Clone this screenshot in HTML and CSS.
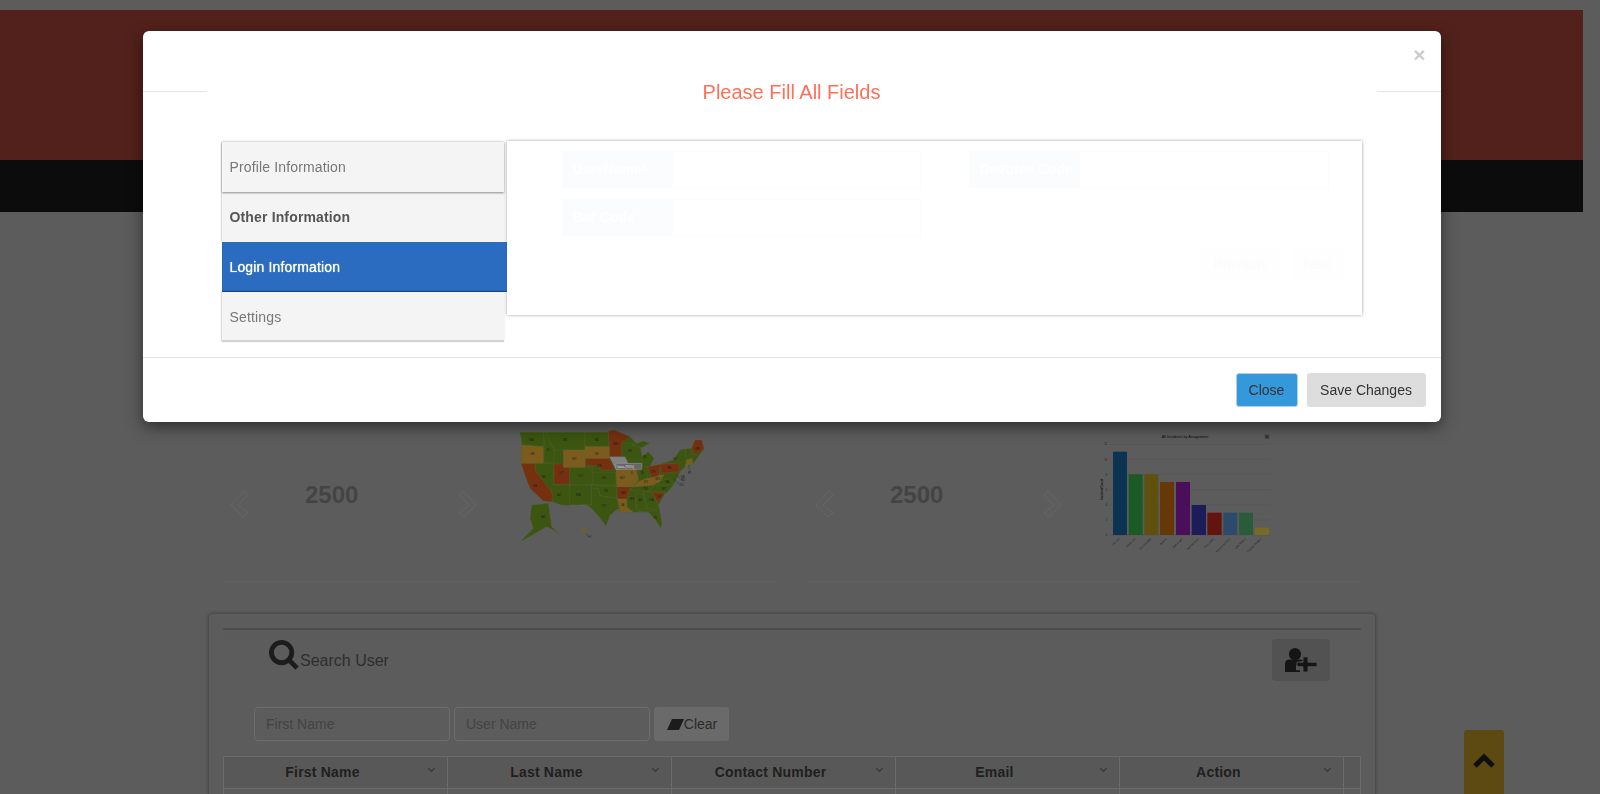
FILE: index.html
```html
<!DOCTYPE html>
<html lang="en">
<head>
    <meta charset="UTF-8">
    <title>Users</title>
    <link rel="stylesheet" href="styles.css">
</head>
<body>
    <header class="banner"></header>
    <nav class="menu-bar"></nav>

    <main class="page">
        <section class="stats">
            <div class="stat-card">
                <div class="slider">
                    <svg class="chevron" viewBox="0 0 20 28"><path d="M14 1 L1 15 L13 27 L18 23 L8 15 L18 5 Z"/></svg>
                    <span class="stat-value">2500</span>
                    <svg class="chevron" viewBox="0 0 20 28"><path d="M6 1 L19 15 L7 27 L2 23 L12 15 L2 5 Z"/></svg>
                </div>
                <svg class="us-map" viewBox="0 0 630 375">
                    <path class="us-land" d="M30 22 L295 22 L312 15 L360 35 L392 70 L398 120 L420 125 L450 118 L460 115 L490 105 L510 75 L545 70 L555 45 L575 45 L582 72 L550 115 L525 125 L510 140 L490 180 L465 205 L445 240 L456 295 L452 310 L435 282 L415 262 L370 262 L330 262 L325 250 L300 270 L288 302 L265 272 L245 250 L230 240 L155 240 L125 230 L100 228 L60 190 L45 150 L33 115 L35 50 Z"/>
                    <g class="states-green">
                        <path d="M30 22 L100 22 L100 65 L50 62 L35 50 Z"/>
                        <path d="M100 22 L112 22 L125 60 L135 75 L130 115 L100 112 L105 65 Z"/>
                        <path d="M108 22 L225 22 L225 75 L135 75 L125 60 Z"/>
                        <path d="M225 22 L295 22 L298 65 L225 65 Z"/>
                        <path d="M335 55 L370 55 L392 70 L398 105 L350 105 L335 90 Z"/>
                        <path d="M365 60 L400 48 L420 55 L395 68 Z"/>
                        <path d="M395 95 L415 80 L432 100 L420 125 L398 125 Z"/>
                        <path d="M385 125 L410 125 L412 160 L385 170 Z"/>
                        <path d="M248 143 L318 143 L318 180 L248 180 Z"/>
                        <path d="M178 127 L248 127 L248 180 L178 180 Z"/>
                        <path d="M75 115 L130 117 L130 190 L122 205 L75 135 Z"/>
                        <path d="M125 180 L178 180 L178 242 L155 240 L125 228 Z"/>
                        <path d="M178 180 L245 180 L245 240 L178 240 Z"/>
                        <path d="M245 180 L320 185 L320 220 L270 212 L265 190 L245 190 Z"/>
                        <path d="M245 190 L265 190 L270 212 L320 220 L325 250 L300 270 L288 302 L265 272 L245 250 L230 240 L207 240 L245 240 Z"/>
                        <path d="M350 215 L376 215 L376 255 L355 258 Z"/>
                        <path d="M378 205 L400 205 L410 250 L380 250 Z"/>
                        <path d="M400 200 L425 200 L445 240 L440 255 L412 250 Z"/>
                        <path d="M380 258 L440 258 L456 295 L452 310 L435 282 L415 262 Z"/>
                        <path d="M415 200 L435 180 L490 180 L470 205 Z"/>
                        <path d="M360 195 L370 185 L435 180 L415 200 Z"/>
                        <path d="M430 180 L455 165 L480 160 L490 180 Z"/>
                        <path d="M460 115 L490 105 L510 75 L525 72 L530 105 L510 115 Z"/>
                        <path d="M525 72 L545 70 L545 100 L530 105 Z"/>
                        <path d="M65 240 L115 235 L125 305 L160 335 L140 320 L110 305 L50 340 L30 350 L70 310 L60 280 Z"/>
                    </g>
                    <g class="states-red">
                        <path d="M295 18 L312 15 L360 35 L335 55 L335 95 L298 95 L298 65 Z"/>
                        <path d="M228 100 L298 100 L315 135 L270 135 L270 122 L228 122 Z"/>
                        <path d="M132 117 L160 117 L160 127 L178 127 L178 178 L132 178 Z"/>
                        <path d="M33 115 L75 115 L75 135 L128 205 L125 230 L100 228 L60 190 L45 150 Z"/>
                        <path d="M320 185 L362 185 L350 222 L323 222 Z"/>
                        <path d="M425 200 L465 205 L443 233 Z"/>
                        <path d="M412 125 L450 118 L448 150 L425 158 Z"/>
                        <path d="M450 118 L505 115 L510 140 L455 145 Z"/>
                        <path d="M545 70 L555 45 L575 45 L582 72 L555 90 Z"/>
                    </g>
                    <g class="states-gold">
                        <path d="M35 60 L100 65 L100 115 L33 115 Z"/>
                        <path d="M160 75 L225 75 L225 127 L160 127 Z"/>
                        <path d="M225 65 L298 65 L298 100 L225 100 Z"/>
                        <path d="M318 135 L355 130 L370 185 L320 185 Z"/>
                        <path d="M355 115 L375 115 L385 165 L370 185 L358 150 Z"/>
                        <path d="M370 185 L385 170 L412 160 L440 155 L455 165 L430 180 L375 185 Z"/>
                        <path d="M435 160 L448 150 L462 150 L445 175 Z"/>
                        <path d="M323 222 L350 222 L350 245 L370 262 L330 262 Z"/>
                        <path d="M530 105 L545 100 L550 115 L525 125 Z"/>
                        <path d="M215 310 L225 312 L228 324 L216 322 Z"/>
                    </g>
                    <path class="state-hover" d="M298 95 L345 95 L355 115 L355 130 L318 135 Z"/>
                    <g class="islands">
                        <circle cx="167" cy="283" r="2"/>
                        <circle cx="185" cy="292" r="2"/>
                        <circle cx="200" cy="297" r="2.5"/>
                    </g>
                    <g class="map-lines">
                        <path d="M228 324 L235 335 M495 150 L510 158 M490 160 L510 180 M535 120 L540 140"/>
                    </g>
                    <g class="map-labels">
                        <text x="57" y="48">WA</text>
                        <text x="110" y="78">ID</text>
                        <text x="160" y="47">MT</text>
                        <text x="254" y="47">ND</text>
                        <text x="60" y="91">OR</text>
                        <text x="186" y="104">WY</text>
                        <text x="254" y="89">SD</text>
                        <text x="310" y="60">MN</text>
                        <text x="354" y="82">WI</text>
                        <text x="400" y="100">MI</text>
                        <text x="262" y="126">NE</text>
                        <text x="95" y="160">NV</text>
                        <text x="68" y="185">CA</text>
                        <text x="148" y="148">UT</text>
                        <text x="205" y="157">CO</text>
                        <text x="276" y="163">KS</text>
                        <text x="142" y="214">AZ</text>
                        <text x="198" y="214">NM</text>
                        <text x="282" y="202">OK</text>
                        <text x="275" y="245">TX</text>
                        <text x="94" y="280">AK</text>
                        <text x="330" y="163">MO</text>
                        <text x="362" y="146">IL</text>
                        <text x="392" y="146">IN</text>
                        <text x="422" y="143">OH</text>
                        <text x="472" y="133">PA</text>
                        <text x="490" y="105">NY</text>
                        <text x="556" y="74">ME</text>
                        <text x="402" y="173">KY</text>
                        <text x="436" y="166">WV</text>
                        <text x="466" y="173">VA</text>
                        <text x="400" y="194">TN</text>
                        <text x="456" y="196">NC</text>
                        <text x="442" y="219">SC</text>
                        <text x="334" y="206">AR</text>
                        <text x="332" y="244">LA</text>
                        <text x="360" y="226">MS</text>
                        <text x="386" y="229">AL</text>
                        <text x="418" y="229">GA</text>
                        <text x="432" y="282">FL</text>
                        <text x="534" y="146">RI</text>
                        <text x="512" y="160">DE</text>
                        <text x="512" y="167">MD</text>
                        <text x="510" y="182">DC</text>
                        <text class="map-hi" x="235" y="340">HI</text>
                    </g>
                    <rect class="map-tip-box" x="318" y="115" width="77" height="18" rx="1"/>
                    <text class="map-tip" x="322" y="128">Iowa (91%)</text>
                </svg>
            </div>
            <div class="stat-card">
                <div class="slider">
                    <svg class="chevron" viewBox="0 0 20 28"><path d="M14 1 L1 15 L13 27 L18 23 L8 15 L18 5 Z"/></svg>
                    <span class="stat-value">2500</span>
                    <svg class="chevron" viewBox="0 0 20 28"><path d="M6 1 L19 15 L7 27 L2 23 L12 15 L2 5 Z"/></svg>
                </div>
                <svg class="bar-chart" viewBox="0 0 600 390">
                    <text class="chart-title" x="288" y="38">All Incidents by Assignment</text>
                    <rect class="chart-menu" x="527" y="28" width="14" height="14"/>
                    <path class="chart-menu-lines" d="M529 32 H539 M529 35 H539 M529 38 H539"/>
                    <path class="chart-grid" d="M60 58 H545 M60 103 H545 M60 148 H545 M60 194 H545 M60 240 H545 M60 285 H545 M60 330 H545"/>
                    <g class="chart-ticks">
                        <text x="55" y="61">12</text>
                        <text x="55" y="107">10</text>
                        <text x="55" y="152">8</text>
                        <text x="55" y="198">6</text>
                        <text x="55" y="244">4</text>
                        <text x="55" y="289">2</text>
                        <text x="55" y="334">0</text>
                    </g>
                    <text class="chart-axis" transform="translate(42 193) rotate(-90)">Incident Count</text>
                    <rect x="72" y="80" width="42" height="250" fill="#0b3352"/>
                    <rect x="119" y="148" width="42" height="182" fill="#1c5a24"/>
                    <rect x="166" y="148" width="42" height="182" fill="#60500e"/>
                    <rect x="213" y="171" width="42" height="159" fill="#663808"/>
                    <rect x="261" y="171" width="42" height="159" fill="#4a0e5a"/>
                    <rect x="308" y="240" width="43" height="90" fill="#1c1c58"/>
                    <rect x="355" y="263" width="43" height="67" fill="#64140e"/>
                    <rect x="403" y="263" width="42" height="67" fill="#2e4a6a"/>
                    <rect x="450" y="263" width="42" height="67" fill="#2a5c3a"/>
                    <rect x="497" y="308" width="43" height="22" fill="#7a6a28"/>
                    <g class="chart-labels">
                        <text transform="translate(92 342) rotate(-45)">Eric Joy</text>
                        <text transform="translate(140 342) rotate(-45)">David Lee</text>
                        <text transform="translate(187 342) rotate(-45)">Don Goodlife</text>
                        <text transform="translate(234 342) rotate(-45)">Beverly</text>
                        <text transform="translate(282 342) rotate(-45)">Beth Anglin</text>
                        <text transform="translate(330 342) rotate(-45)">Bud Richman</text>
                        <text transform="translate(376 342) rotate(-45)">Fred Luddy</text>
                        <text transform="translate(424 342) rotate(-45)">Howard Johnson</text>
                        <text transform="translate(471 342) rotate(-45)">Luke Wilson</text>
                        <text transform="translate(518 342) rotate(-45)">Charles Beckley</text>
                    </g>
                </svg>
            </div>
        </section>

        <section class="user-panel">
            <div class="panel-rule"></div>
            <div class="panel-top">
                <div class="panel-title">
                    <svg class="search-icon" viewBox="0 0 32 32"><circle cx="13" cy="13" r="10.5"/><path d="M20.5 20.5 L29 29"/></svg>
                    <span>Search User</span>
                </div>
                <button class="add-user" type="button">
                    <svg viewBox="0 0 32 27" width="32" height="24" preserveAspectRatio="none">
                        <ellipse cx="10" cy="7" rx="6" ry="7"/>
                        <path d="M0 27 V18 Q0 13 5 13 H15 Q18 13 19 15 H15 V19 H11 V25 H15 V27 Z"/>
                        <path d="M18 10 H23 V16 H32 V21 H23 V27 H18 V21 H12 V16 H18 Z"/>
                    </svg>
                </button>
            </div>
            <form class="filters">
                <input type="text" placeholder="First Name">
                <input type="text" placeholder="User Name">
                <button class="clear-btn" type="button">
                    <svg viewBox="0 0 17 11" width="17" height="11"><path d="M5 0 H17 L12 11 H0 Z"/></svg>Clear
                </button>
            </form>
            <div class="grid-head">
                <div class="grid-cell">First Name<span class="sort-mark"></span></div>
                <div class="grid-cell">Last Name<span class="sort-mark"></span></div>
                <div class="grid-cell">Contact Number<span class="sort-mark"></span></div>
                <div class="grid-cell">Email<span class="sort-mark"></span></div>
                <div class="grid-cell">Action<span class="sort-mark"></span></div>
                <div class="grid-cell"></div>
            </div>
            <div class="grid-row">
                <div class="grid-cell"></div>
                <div class="grid-cell"></div>
                <div class="grid-cell"></div>
                <div class="grid-cell"></div>
                <div class="grid-cell"></div>
                <div class="grid-cell"></div>
            </div>
        </section>
    </main>

    <button class="to-top" type="button">
        <svg viewBox="0 0 22 16" width="22" height="16"><path d="M2 13 L11 4 L20 13"/></svg>
    </button>

    <div class="backdrop">
        <div class="modal">
            <button class="modal-close" type="button">×</button>
            <div class="modal-head">
                <h4>Please Fill All Fields</h4>
            </div>
            <div class="modal-body">
                <ul class="tabs">
                    <li class="tab tab-first">Profile Information</li>
                    <li class="tab tab-bold">Other Information</li>
                    <li class="tab tab-active">Login Information</li>
                    <li class="tab tab-last">Settings</li>
                </ul>
                <div class="tab-pane">
                    <div class="pane-fields">
                        <div class="field"><label>UserName*</label><span class="field-box"></span></div>
                        <div class="field"><label>Devotee Code</label><span class="field-box"></span></div>
                        <div class="field"><label>Bar Code</label><span class="field-box"></span></div>
                    </div>
                    <div class="pane-nav">
                        <button class="ghost-btn" type="button">Previous</button>
                        <button class="ghost-btn" type="button">Next</button>
                    </div>
                </div>
            </div>
            <div class="modal-foot">
                <button class="btn btn-blue" type="button">Close</button>
                <button class="btn btn-gray" type="button">Save Changes</button>
            </div>
        </div>
    </div>
</body>
</html>
```

FILE: styles.css
```css
* {
    box-sizing: border-box;
}
html, body {
    height: 794px;
    overflow: hidden;
}
body {
    margin: 0;
    padding: 10px 17px 0 0;
    background-color: #5c5c5c;
    font-family: "Liberation Sans", Arial, sans-serif;
    font-size: 14px;
    color: #2a2a2a;
}
button {
    font-family: inherit;
    border: none;
    cursor: pointer;
}

/* page behind the dialog */
.banner {
    height: 150px;
    background-color: #52211b;
}
.menu-bar {
    height: 52px;
    background-color: #0c0c0c;
}
.page {
    padding: 218px 207px 0 208px;
}
.stats {
    display: flex;
    gap: 30px;
    padding: 0 14px;
    height: 152px;
    margin-bottom: 31px;
}
.stat-card {
    flex: 1;
    display: flex;
    border-bottom: 1px solid #606060;
    border-radius: 3px;
}
.slider {
    width: 262px;
    flex: none;
    display: flex;
    align-items: flex-start;
    padding-left: 8px;
}
.chevron {
    width: 20px;
    height: 28px;
    margin-top: 60px;
    fill: none;
    stroke: #656565;
    stroke-width: 1;
}
.stat-value {
    width: 152px;
    margin: 50px 0 0 55px;
    font-size: 24px;
    font-weight: bold;
    line-height: 30px;
    color: #444;
}
.us-map {
    width: 210px;
    height: 125px;
    margin: -5px 0 0 26px;
    flex: none;
}
.us-land {
    fill: #3c5510;
}
.states-green path {
    fill: #3c5510;
    stroke: #5f6a50;
    stroke-width: .8;
}
.states-red path {
    fill: #75300f;
    stroke: #5f6a50;
    stroke-width: .8;
}
.states-gold path {
    fill: #7c5c1c;
    stroke: #5f6a50;
    stroke-width: .8;
}
.state-hover {
    fill: #808080;
}
.islands circle {
    fill: #7c5c1c;
}
.map-lines path {
    stroke: #222;
    stroke-width: 1;
    fill: none;
}
.map-labels text {
    font-size: 9px;
    fill: #1c1c1c;
}
.map-labels .map-hi {
    fill: #2a2a4a;
}
.map-tip-box {
    fill: #666;
    stroke: #b0b0b0;
    stroke-width: 1.2;
}
.map-tip {
    font-size: 10px;
    fill: #e0e0e0;
}
.bar-chart {
    width: 200px;
    height: 130px;
    margin: -5px 0 0 20px;
    flex: none;
}
.chart-title {
    font-size: 11.5px;
    fill: #0c0c0c;
    text-anchor: middle;
}
.chart-menu {
    fill: #4a4a4a;
}
.chart-menu-lines {
    stroke: #222;
    stroke-width: 1.5;
}
.chart-grid {
    stroke: #525252;
    stroke-width: 1.5;
    fill: none;
}
.chart-ticks text {
    font-size: 8px;
    fill: #1c1c1c;
    text-anchor: end;
}
.chart-axis {
    font-size: 9px;
    font-weight: bold;
    fill: #0c0c0c;
    text-anchor: middle;
}
.chart-labels text {
    font-size: 8px;
    fill: #1c1c1c;
    text-anchor: end;
}

.user-panel {
    height: 181px;
    overflow: hidden;
    padding: 14px 14px 0;
    border: 1px solid #4d4d4d;
    border-bottom: none;
    border-radius: 5px 5px 0 0;
    box-shadow: 0 0 3px rgba(0, 0, 0, .3);
}
.panel-rule {
    height: 2px;
    background-color: #4c4c4c;
    box-shadow: 0 6px 8px rgba(0, 0, 0, .04);
}
.panel-top {
    display: flex;
    justify-content: space-between;
    padding: 9px 31px 0 46px;
    height: 77px;
}
.panel-title {
    display: flex;
    align-items: flex-end;
    height: 34px;
    font-size: 16px;
    color: #2e2e2e;
}
.panel-title span {
    padding-bottom: 3px;
}
.search-icon {
    width: 31px;
    height: 31px;
    margin-bottom: 2px;
    fill: none;
    stroke: #1c1c1c;
    stroke-width: 5;
}
.add-user {
    width: 58px;
    height: 42px;
    padding: 0;
    background-color: #525252;
    border-radius: 4px;
    display: flex;
    align-items: center;
    justify-content: center;
}
.add-user svg {
    fill: #151515;
}
.add-user svg path:last-child {
    stroke: #525252;
    stroke-width: 1;
}
.filters {
    display: flex;
    gap: 4px;
    padding-left: 31px;
    height: 34px;
    margin-bottom: 15px;
}
.filters input {
    width: 196px;
    padding: 0 11px;
    font-family: inherit;
    font-size: 14px;
    background: transparent;
    border: 1px solid #6d6d6d;
    border-radius: 4px;
}
.filters input::placeholder {
    color: #434343;
}
.clear-btn {
    width: 75px;
    padding: 0 0 0 1px;
    font-size: 14px;
    color: #2a2a2a;
    background-color: #6a6a6a;
    border-radius: 3px;
    display: flex;
    align-items: center;
    justify-content: center;
}
.clear-btn svg {
    fill: #1c1c1c;
}
.grid-head, .grid-row {
    display: grid;
    grid-template-columns: repeat(5, 224px) 17px;
    border-left: 1px solid #6a6a6a;
    border-top: 1px solid #6a6a6a;
}
.grid-head {
    height: 32px;
    font-weight: bold;
    letter-spacing: .2px;
    color: #1f1f1f;
    background-color: #585858;
}
.grid-row {
    height: 30px;
}
.grid-cell {
    position: relative;
    display: flex;
    align-items: center;
    justify-content: center;
    border-right: 1px solid #6a6a6a;
    padding: 0 26px 2px 0;
}
.grid-cell:last-child {
    padding: 0;
}
.sort-mark {
    position: absolute;
    right: 13px;
    top: 9px;
    width: 5px;
    height: 5px;
    border-right: 1px solid #333;
    border-bottom: 1px solid #333;
    transform: rotate(45deg);
}
.to-top {
    position: fixed;
    left: 1464px;
    top: 730px;
    width: 40px;
    height: 64px;
    padding: 0;
    background-color: #5d4a12;
    border-radius: 3px 3px 0 0;
}
.to-top svg {
    fill: none;
    stroke: #0f0f0f;
    stroke-width: 5;
}

/* dialog */
.backdrop {
    position: fixed;
    top: 0;
    left: 0;
    right: 17px;
    bottom: 0;
}
.modal {
    position: relative;
    width: 1298px;
    height: 391px;
    margin: 31px auto 0;
    background-color: #fff;
    border-radius: 6px;
    box-shadow: 0 5px 15px rgba(0, 0, 0, .5);
    display: flex;
    flex-direction: column;
}
.modal-close {
    position: absolute;
    top: 13px;
    right: 15px;
    padding: 0;
    background: none;
    font-size: 21px;
    font-weight: bold;
    line-height: 21px;
    color: #ccc;
}
.modal-head {
    height: 120px;
    padding-top: 60px;
    text-align: center;
    background: linear-gradient(#e5e5e5, #e5e5e5) 0 60px / 100% 1px no-repeat;
}
.modal-head h4 {
    margin: -11px 64px 0;
    height: 24px;
    font-size: 20px;
    font-weight: normal;
    line-height: 24px;
    color: #ff6f59;
    background-color: #fff;
}
.modal-body {
    display: flex;
    align-items: flex-start;
    height: 216px;
    padding: 0 79px;
    margin-top: -10px;
    flex: none;
}
.tabs {
    list-style: none;
    margin: 1px 0 0;
    padding: 0;
    width: 285px;
    flex: none;
}
.tab {
    position: relative;
    width: 282px;
    height: 50px;
    padding: 0 8px;
    line-height: 50px;
    letter-spacing: .15px;
    color: #777;
    background-color: #f4f4f4;
    box-shadow: -1px 0 1px rgba(0, 0, 0, .1), 0 -1px 2px rgba(0, 0, 0, .12);
}
.tab-first {
    z-index: 1;
    box-shadow: -1px 0 1px rgba(0, 0, 0, .1), 0 -1px 2px rgba(0, 0, 0, .12), 0 1px 2px rgba(0, 0, 0, .4);
}
.tab-bold {
    font-weight: bold;
    letter-spacing: .15px;
    color: #555;
}
.tab-active {
    width: 285px;
    color: #fff;
    text-shadow: 0 0 1px #fff;
    background-color: #2b6cc0;
    box-shadow: inset 0 -1px 1px #1d4a85;
}
.tab-last {
    border-bottom: 2px solid #d2d2d2;
}
.tab-pane {
    flex: 1;
    height: 174px;
    padding: 10px 17px 0 55px;
    background-color: #fff;
    box-shadow: 0 0 3px rgba(0, 0, 0, .4);
}
.pane-fields {
    display: grid;
    grid-template-columns: 359px 360px;
    column-gap: 48px;
    row-gap: 11px;
}
.field {
    display: flex;
    height: 37px;
    border: 1px solid #fcfcfc;
}
.field label {
    width: 110px;
    padding-left: 10px;
    font-weight: bold;
    line-height: 34px;
    color: #fff;
    background-color: #fbfcfe;
}
.field-box {
    flex: 1;
}
.pane-nav {
    display: flex;
    justify-content: flex-end;
    gap: 12px;
    margin-top: 11px;
}
.ghost-btn {
    height: 33px;
    padding: 0 12px;
    font-size: 14px;
    color: #fbfbfb;
    background-color: #fefefe;
    border-radius: 3px;
}
.modal-foot {
    flex: 1;
    display: flex;
    justify-content: flex-end;
    align-items: flex-start;
    gap: 9px;
    padding: 15px 15px 0 0;
    border-top: 1px solid #e5e5e5;
}
.btn {
    height: 34px;
    padding: 0 12px;
    font-size: 14px;
    color: #333;
    border-radius: 3px;
}
.btn-blue {
    width: 62px;
    background-color: #3498db;
    border: 1px solid #b8cfe0;
}
.btn-gray {
    width: 119px;
    background-color: #ddd;
}
```
